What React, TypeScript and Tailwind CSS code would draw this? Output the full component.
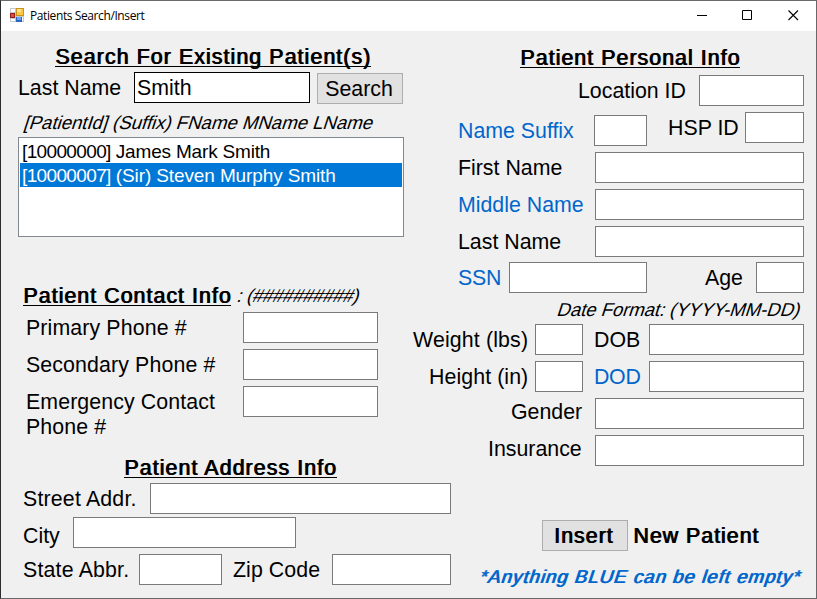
import type { ReactNode } from "react";

type TextProps = { children: ReactNode; className?: string };

function Label({ children, className = "" }: TextProps) {
  return (
    <label className={`block shrink-0 whitespace-nowrap text-[21.33px] leading-[25px] ${className}`}>
      {children}
    </label>
  );
}

function Heading({ children, className = "" }: TextProps) {
  return (
    <h2
      className={`block h-[23px] shrink-0 whitespace-nowrap border-b border-black pt-px text-[21.33px] font-normal leading-[25px] [text-shadow:1px_0_0_currentColor] ${className}`}
    >
      {children}
    </h2>
  );
}

function Slanted({ children, className = "" }: TextProps) {
  return (
    <span
      className={`block w-max shrink-0 origin-[0_17px] skew-x-[-18deg] whitespace-nowrap text-[18.67px] leading-[22px] ${className}`}
    >
      {children}
    </span>
  );
}

function Field({ className = "", value = "" }: { className?: string; value?: string }) {
  return (
    <input
      type="text"
      defaultValue={value}
      className={`block h-[31px] shrink-0 rounded-none border bg-white px-[2px] pt-[2px] text-[21.33px] leading-[25px] outline-none ${className}`}
    />
  );
}

function Row({ children, className = "" }: TextProps) {
  return <div className={`flex h-[31px] shrink-0 items-start ${className}`}>{children}</div>;
}

function FormIcon() {
  return (
    <svg width="14" height="14" viewBox="0 0 14 14" shapeRendering="crispEdges">
      <rect width="14" height="14" fill="#c4c8cc" />
      <path d="M1 1h4v3H1zM1 11h4v2H1zM12 9h1v4h-1z" fill="#fff" />
      <rect x="6" y="0" width="8" height="8" fill="#c8941c" />
      <rect x="7" y="1" width="6" height="6" fill="#ffc83c" />
      <rect x="7" y="1" width="4" height="3" fill="#ffe48c" />
      <rect x="0" y="5" width="5" height="5" fill="#96201c" />
      <rect x="1" y="6" width="3" height="3" fill="#d8503c" />
      <rect x="6" y="9" width="6" height="5" fill="#2c62c0" />
      <rect x="7" y="9" width="4" height="3" fill="#6ca4f0" />
    </svg>
  );
}

function TitleBar() {
  return (
    <header className="flex h-[30px] shrink-0 items-start bg-white">
      <div className="ml-[9px] mt-[7px]">
        <FormIcon />
      </div>
      <span className="ml-[6px] mt-[6px] whitespace-nowrap font-['Open_Sans','Noto_Sans',sans-serif] text-[12px] leading-[17px] tracking-[-0.4px]">
        Patients Search/Insert
      </span>
      <svg className="ml-auto mr-[17px] mt-[9px]" width="102" height="11" viewBox="0 0 102 11" fill="none" stroke="#000">
        <path d="M0 5.5h10" />
        <path d="M45.5 .5h9v9h-9z" />
        <path d="M91.5 .5l9.5 9.5M101 .5l-9.5 9.5" strokeWidth="1.1" />
      </svg>
    </header>
  );
}

function LeftColumn() {
  return (
    <section className="flex w-[454px] shrink-0 flex-col items-start">
      <Heading className="ml-[54px] mt-[13px] w-[316px] tracking-[1.09px]">Search For Existing Patient(s)</Heading>
      <Row className="mt-[5px]">
        <Label className="ml-[17px] mt-[4px] w-[116px]">Last Name</Label>
        <Field value="Smith" className="w-[176px] border-black" />
        <button className="ml-[7px] mt-px h-[31px] w-[86px] border border-[#adadad] bg-[#e1e1e1] pr-[2px] pt-[2px] text-[21.33px] leading-[25px]">
          Search
        </button>
      </Row>
      <Slanted className="ml-[22px] mt-[9px] tracking-[-0.04px]">[PatientId] (Suffix) FName MName LName</Slanted>
      <ul className="ml-[17px] mt-[3px] h-[100px] w-[386px] border border-[#828790] bg-white p-px text-[19px] leading-[24px]">
        <li className="h-[24px] pl-[2px] pt-px tracking-[-0.18px]">
          <span className="tracking-[-0.64px]">[10000000]</span> James Mark Smith
        </li>
        <li className="h-[24px] bg-[#0078d7] pl-[2px] pt-px tracking-[-0.12px] text-white">
          <span className="tracking-[-0.64px]">[10000007]</span> (Sir) Steven Murphy Smith
        </li>
      </ul>

      <div className="mt-[46px] flex h-[23px] items-start">
        <Heading className="ml-[22px] w-[208px] tracking-[1.05px]">Patient Contact Info</Heading>
        <Slanted className="ml-[5px] mt-[2px] tracking-[-0.35px]">: (##########)</Slanted>
      </div>
      <Row className="mt-[6px]">
        <Label className="ml-[25px] mt-[4px] w-[217px] tracking-[0.12px]">Primary Phone #</Label>
        <Field className="w-[135px] border-[#7a7a7a]" />
      </Row>
      <Row className="mt-[6px]">
        <Label className="ml-[25px] mt-[4px] w-[217px] tracking-[0.12px]">Secondary Phone #</Label>
        <Field className="w-[135px] border-[#7a7a7a]" />
      </Row>
      <Row className="mt-[6px]">
        <Label className="ml-[25px] mt-[4px] w-[217px] tracking-[0.1px]">
          Emergency Contact
          <br />
          Phone #
        </Label>
        <Field className="w-[135px] border-[#7a7a7a]" />
      </Row>

      <Heading className="ml-[123px] mt-[38px] w-[213px] tracking-[1.09px]">Patient Address Info</Heading>
      <Row className="mt-[5px]">
        <Label className="ml-[22px] mt-[4px] w-[127px] tracking-[0.18px]">Street Addr.</Label>
        <Field className="w-[301px] border-[#7a7a7a]" />
      </Row>
      <Row className="mt-[3px]">
        <Label className="ml-[22px] mt-[7px] w-[50px]">City</Label>
        <Field className="w-[223px] border-[#7a7a7a]" />
      </Row>
      <Row className="mt-[6px]">
        <Label className="ml-[22px] mt-[4px] w-[116px] tracking-[0.18px]">State Abbr.</Label>
        <Field className="w-[83px] border-[#7a7a7a]" />
        <Label className="ml-[11px] mt-[4px] w-[99px] tracking-[0.08px]">Zip Code</Label>
        <Field className="w-[119px] border-[#7a7a7a]" />
      </Row>
    </section>
  );
}

function RightColumn() {
  return (
    <section className="flex w-[361px] shrink-0 flex-col items-start">
      <Heading className="ml-[65px] mt-[14px] w-[220px] tracking-[1.05px]">Patient Personal Info</Heading>
      <Row className="mt-[7px]">
        <Label className="ml-[123px] mt-[4px] w-[121px]">Location ID</Label>
        <Field className="w-[105px] border-[#7a7a7a]" />
      </Row>
      <Row className="mt-[6px]">
        <Label className="ml-[3px] mt-[7px] w-[136px] text-[#0066cc]">Name Suffix</Label>
        <Field className="mt-[3px] w-[53px] border-[#7a7a7a]" />
        <Label className="ml-[21px] mt-[4px] w-[77px]">HSP ID</Label>
        <Field className="w-[59px] border-[#7a7a7a]" />
      </Row>
      <Row className="mt-[9px]">
        <Label className="ml-[3px] mt-[4px] w-[137px]">First Name</Label>
        <Field className="w-[209px] border-[#7a7a7a]" />
      </Row>
      <Row className="mt-[6px]">
        <Label className="ml-[3px] mt-[4px] w-[137px] text-[#0066cc]">Middle Name</Label>
        <Field className="w-[209px] border-[#7a7a7a]" />
      </Row>
      <Row className="mt-[6px]">
        <Label className="ml-[3px] mt-[4px] w-[137px]">Last Name</Label>
        <Field className="w-[209px] border-[#7a7a7a]" />
      </Row>
      <Row className="mt-[5px]">
        <Label className="ml-[3px] mt-[4px] w-[51px] tracking-[-0.2px] text-[#0066cc]">SSN</Label>
        <Field className="w-[138px] border-[#7a7a7a]" />
        <Label className="ml-[58px] mt-[4px] w-[51px]">Age</Label>
        <Field className="w-[48px] border-[#7a7a7a]" />
      </Row>
      <Slanted className="ml-[101px] mt-[6px] tracking-[-0.09px]">Date Format: (YYYY-MM-DD)</Slanted>
      <Row className="mt-[3px]">
        <Label className="ml-[-42px] mt-[4px] w-[122px] tracking-[0.15px]">Weight (lbs)</Label>
        <Field className="w-[48px] border-[#7a7a7a]" />
        <Label className="ml-[11px] mt-[4px] w-[55px]">DOB</Label>
        <Field className="w-[155px] border-[#7a7a7a]" />
      </Row>
      <Row className="mt-[6px]">
        <Label className="ml-[-26px] mt-[4px] w-[106px] tracking-[0.08px]">Height (in)</Label>
        <Field className="w-[48px] border-[#7a7a7a]" />
        <Label className="ml-[11px] mt-[4px] w-[55px] tracking-[-0.3px] text-[#0066cc]">DOD</Label>
        <Field className="w-[155px] border-[#7a7a7a]" />
      </Row>
      <Row className="mt-[6px]">
        <Label className="ml-[56px] mt-[2px] w-[84px]">Gender</Label>
        <Field className="w-[209px] border-[#7a7a7a]" />
      </Row>
      <Row className="mt-[6px]">
        <Label className="ml-[33px] mt-[2px] w-[107px]">Insurance</Label>
        <Field className="w-[209px] border-[#7a7a7a]" />
      </Row>
      <Row className="mt-[54px]">
        <button className="ml-[87px] h-[31px] w-[86px] border border-[#adadad] bg-[#e1e1e1] pr-[3px] pt-[2px] text-[21.33px] leading-[25px] tracking-[1px] [text-shadow:1px_0_0_currentColor]">
          Insert
        </button>
        <Label className="ml-[5px] mt-[4px] tracking-[1px] [text-shadow:1px_0_0_currentColor]">New Patient</Label>
      </Row>
      <Slanted className="ml-[23px] mt-[15px] tracking-[1px] text-[#0066cc] [text-shadow:1px_0_0_currentColor]">
        *Anything BLUE can be left empty*
      </Slanted>
    </section>
  );
}

export default function App() {
  return (
    <div className="flex h-[599px] w-[817px] flex-col overflow-hidden border border-b-[#68686a] border-l-[#2c2c30] border-r-[#68686a] border-t-[#6c696c] bg-[#f0f0f0] font-['Liberation_Sans',Arial,sans-serif] text-black">
      <TitleBar />
      <main className="flex min-h-0 flex-1">
        <LeftColumn />
        <RightColumn />
      </main>
    </div>
  );
}
